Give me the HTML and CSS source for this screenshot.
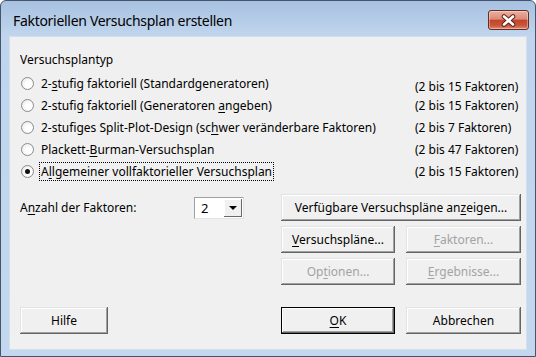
FILE: index.html
```html
<!DOCTYPE html>
<html lang="de">
<head>
    <meta charset="UTF-8">
    <title>Faktoriellen Versuchsplan erstellen</title>
    <link rel="stylesheet" href="styles.css">
</head>
<body>
    <div class="window">
        <div class="titlebar">
            <span class="title">Faktoriellen Versuchsplan erstellen</span>
            <button class="close" type="button">
                <svg width="17" height="13" viewBox="0 0 17 13">
                    <path d="M4 2.5 L13 10.5 M13 2.5 L4 10.5" stroke="#5a2418" stroke-width="4.6" stroke-linecap="round"/>
                    <path d="M4 2.5 L13 10.5 M13 2.5 L4 10.5" stroke="#fff" stroke-width="2.6" stroke-linecap="round"/>
                </svg>
            </button>
        </div>

        <div class="client">
            <div class="group-label">Versuchsplantyp</div>
            <div class="options">
                <label class="radio"><span class="dot"></span><span>2-<u>s</u>tufig faktoriell (Standardgeneratoren)</span></label>
                <span class="range first">(2 bis 15 Faktoren)</span>
                <label class="radio"><span class="dot"></span><span>2-stufig faktoriell (Generatoren <u>a</u>ngeben)</span></label>
                <span class="range">(2 bis 15 Faktoren)</span>
                <label class="radio"><span class="dot"></span><span>2-stufiges Split-Plot-Design (sc<u>h</u>wer veränderbare Faktoren)</span></label>
                <span class="range">(2 bis 7 Faktoren)</span>
                <label class="radio"><span class="dot"></span><span>Plackett-<u>B</u>urman-Versuchsplan</span></label>
                <span class="range">(2 bis 47 Faktoren)</span>
                <label class="radio checked"><span class="dot"></span><span class="focus">A<u>l</u>lgemeiner vollfaktorieller Versuchsplan</span></label>
                <span class="range">(2 bis 15 Faktoren)</span>
            </div>

            <div class="middle">
                <div class="factors">
                    <span class="factors-label">A<u>n</u>zahl der Faktoren:</span>
                    <div class="combo">
                        <span class="combo-value">2</span>
                        <span class="combo-btn"><span class="arrow"></span></span>
                    </div>
                </div>
                <div class="btn-grid">
                    <button class="btn wide" type="button">Verfügbare Versuchspläne an<u>z</u>eigen...</button>
                    <button class="btn" type="button"><u>V</u>ersuchspläne...</button>
                    <button class="btn" type="button" disabled><u>F</u>aktoren...</button>
                    <button class="btn" type="button" disabled>Op<u>t</u>ionen...</button>
                    <button class="btn" type="button" disabled><u>E</u>rgebnisse...</button>
                </div>
            </div>

            <div class="bottom">
                <button class="btn help" type="button">Hilfe</button>
                <div class="actions">
                    <button class="btn default" type="button"><u>O</u>K</button>
                    <button class="btn" type="button">Abbrechen</button>
                </div>
            </div>
        </div>
    </div>
</body>
</html>
```

FILE: styles.css
```css
body { margin: 0; font-family: "Noto Sans", "Open Sans", sans-serif; font-size: 12px; color: #000; }
u { text-decoration-thickness: 1px; text-underline-offset: 2px; }

.window {
    width: 536px; height: 357px; box-sizing: border-box;
    border: 1px solid #44556b; border-radius: 6px 6px 0 0;
    background: linear-gradient(#a7c1e0, #c0d5ed 34px, #c3d7ee);
    padding: 0 8px 6px;
    display: flex; flex-direction: column;
}
.titlebar { height: 35px; display: flex; align-items: center; justify-content: space-between; }
.title { padding-left: 4px; padding-top: 4px; font-size: 14px; letter-spacing: -0.3px; }
.close {
    width: 41px; height: 20px; margin-top: 3px; margin-right: -2px; padding: 0;
    border: 1px solid #6b2a1f; border-radius: 3px;
    background: linear-gradient(#eab0a2, #dc8a78 45%, #c4432a 52%, #c9563b 80%, #dd8c74);
    box-shadow: inset 0 0 0 1px rgba(255,255,255,.35);
    display: flex; align-items: center; justify-content: center;
}

.client {
    flex: 1; background: #f0f0f0; border: 1px solid #d3dfee;
    padding: 15px 5px 0 10px;
    display: flex; flex-direction: column;
}
.group-label { line-height: 16px; }
.options { margin-top: 4px; display: grid; grid-template-columns: 395px 1fr; grid-auto-rows: 22px; align-items: center; }
.radio { display: flex; align-items: center; gap: 7px; padding-left: 1px; }
.dot {
    flex: none; width: 11px; height: 11px; border-radius: 50%;
    border: 1px solid #8b8b8b;
    background: radial-gradient(circle at 60% 60%, #fff 30%, #e4e4e4);
    display: flex; align-items: center; justify-content: center;
}
.checked .dot::after { content: ""; width: 5px; height: 5px; border-radius: 50%; background: #111; }
.focus { outline: 1px dotted #000; outline-offset: 0; padding: 0 1px; margin-left: -1px; }
.range.first { padding-top: 6px; }

.middle { margin-top: 12px; display: flex; justify-content: space-between; }
.factors { display: flex; align-items: center; height: 27px; }
.factors-label { width: 174px; }
.combo {
    width: 50px; height: 22px; box-sizing: border-box;
    border: 1px solid #a0a0a0; border-right-color: #e3e3e3; border-bottom-color: #e3e3e3;
    background: #fff; display: flex; align-items: stretch;
}
.combo-value { flex: 1; padding-left: 6px; line-height: 20px; font-size: 13px; }
.combo-btn {
    width: 18px; margin: 1px; background: #f0f0f0;
    box-shadow: inset -1px -1px #696969, inset 1px 1px #fff;
    display: flex; align-items: center; justify-content: center;
}
.arrow { width: 0; height: 0; border-left: 4px solid transparent; border-right: 4px solid transparent; border-top: 4px solid #000; }

.btn-grid { width: 240px; display: grid; grid-template-columns: 114px 115px; column-gap: 11px; row-gap: 5px; grid-auto-rows: 27px; }
.btn {
    font: inherit; color: #000; padding: 0; border: none;
    background: #f0f0f0;
    box-shadow: inset -1px -1px #646464, inset 1px 1px #e3e3e3, inset -2px -2px #a0a0a0, inset 2px 2px #fff;
}
.btn:disabled { color: #a3a3a3; }
.btn.wide { grid-column: 1 / 3; }

.bottom { margin-top: 22px; display: flex; justify-content: space-between; }
.bottom .btn { height: 27px; width: 115px; }
.bottom .help { width: 88px; }
.actions { display: flex; gap: 11px; }
.bottom .default { width: 114px; box-shadow: 0 0 0 1px #000 inset, inset -2px -2px #646464, inset 2px 2px #fff, inset -3px -3px #a0a0a0; }
```
